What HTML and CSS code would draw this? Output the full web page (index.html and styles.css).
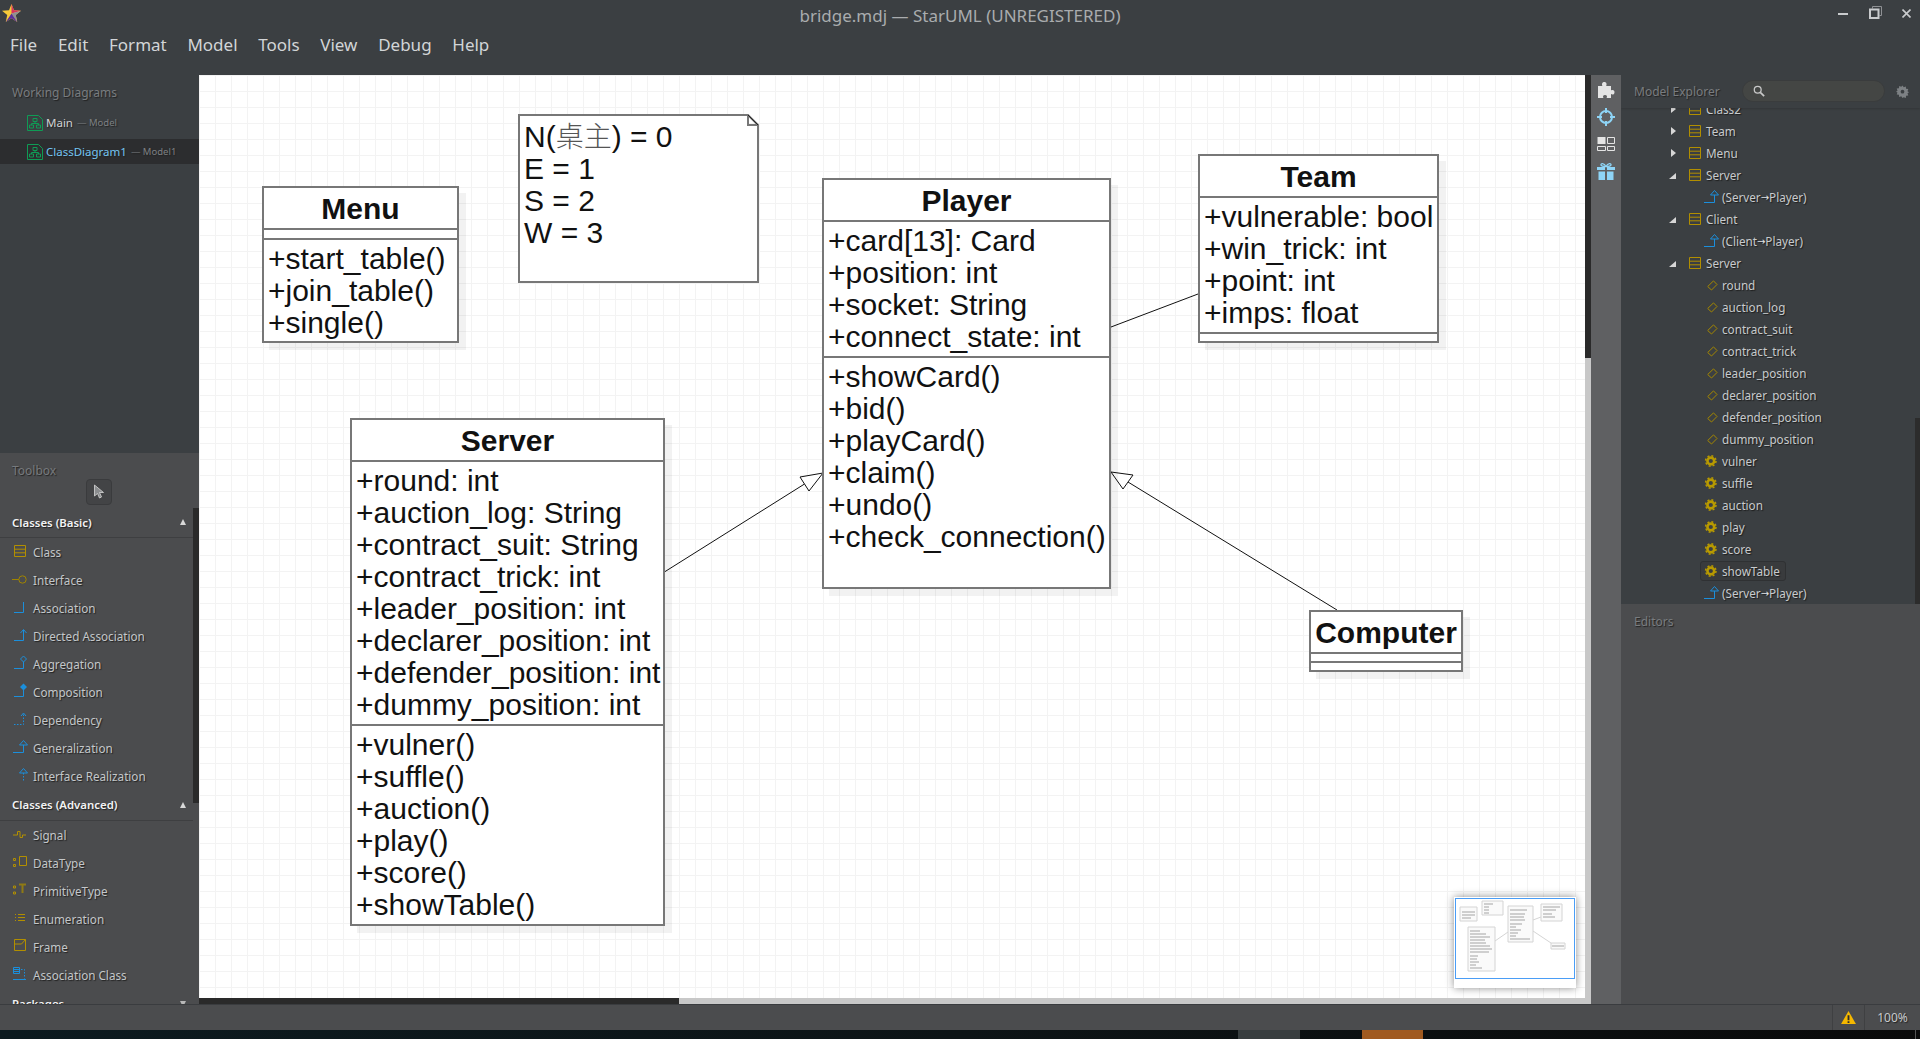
FILE: index.html
```html
<!DOCTYPE html>
<html lang="en">
<head>
    <meta charset="UTF-8">
    <title>bridge.mdj — StarUML (UNREGISTERED)</title>
    <link rel="stylesheet" href="styles.css">
</head>
<body>
    <!-- Icon set -->
    <svg class="icon-defs" aria-hidden="true">
        <symbol id="i-class" viewBox="0 0 16 16"><path d="M2.5 2.5h11v11h-11zM2.5 6.200h11M2.5 9.800h11" fill="none" stroke="#b28f00"/></symbol>
        <symbol id="i-interface" viewBox="0 0 16 16"><path d="M0 8.500h7" stroke="#a08400" fill="none"/><circle cx="10.500" cy="8.500" r="3.700" fill="none" stroke="#a08400"/></symbol>
        <symbol id="i-assoc" viewBox="0 0 16 16"><path d="M2 13.500h9.500V3" fill="none" stroke="#1b8fdc"/></symbol>
        <symbol id="i-directed" viewBox="0 0 16 16"><path d="M2 13.500h9.500V3M8.500 6l3-3.500 3 3.500" fill="none" stroke="#1b8fdc"/></symbol>
        <symbol id="i-aggr" viewBox="0 0 16 16"><path d="M2 13.500h9.500V7M11.500 1l3 3-3 3-3-3z" fill="none" stroke="#1b8fdc"/></symbol>
        <symbol id="i-comp" viewBox="0 0 16 16"><path d="M2 13.500h9.500V7" fill="none" stroke="#1b8fdc"/><path d="M11.500 0.500l3.500 3.500-3.500 3.500L8 4z" fill="#1b8fdc"/></symbol>
        <symbol id="i-dep" viewBox="0 0 16 16"><path d="M2 13.500h9.500V3" fill="none" stroke="#1b8fdc" stroke-dasharray="1.500 1.500"/><path d="M9 5l2.500-3L14 5" fill="none" stroke="#1b8fdc"/></symbol>
        <symbol id="i-gen" viewBox="0 0 16 16"><path d="M1 13.500h10.500V6M7.500 6l4-4.500 4 4.500z" fill="none" stroke="#1b8fdc"/></symbol>
        <symbol id="i-real" viewBox="0 0 16 16"><path d="M11.500 6v9" fill="none" stroke="#1b8fdc" stroke-dasharray="1.500 1.500"/><path d="M7.500 6l4-4.500 4 4.500z" fill="none" stroke="#1b8fdc"/></symbol>
        <symbol id="i-signal" viewBox="0 0 16 16"><path d="M1 9h4.500V5.500h2.500v6h2.500V9H14" fill="none" stroke="#b28f00"/></symbol>
        <symbol id="i-datatype" viewBox="0 0 16 16"><path d="M1.500 3.500h2v2h-2zM1.500 9.500h2v2h-2zM7.500 1.500h7v9h-7z" transform="translate(0 1)" fill="none" stroke="#b28f00"/></symbol>
        <symbol id="i-primitive" viewBox="0 0 16 16"><path d="M1.500 4h2v2h-2zM1.500 10h2v2h-2z" fill="none" stroke="#b28f00"/><path d="M7 2.500h7M10.500 2.500V11" fill="none" stroke="#8f7a14" stroke-width="2"/></symbol>
        <symbol id="i-enum" viewBox="0 0 16 16"><path d="M3 4.500h1M6 4.500h7M3 7.500h1M6 7.500h7M3 10.500h1M6 10.500h7" fill="none" stroke="#b28f00"/></symbol>
        <symbol id="i-frame" viewBox="0 0 16 16"><path d="M2.500 1.500h11v11h-11zM2.500 6h7l4-4.500" fill="none" stroke="#b28f00"/></symbol>
        <symbol id="i-assoc-class" viewBox="0 0 16 16"><path d="M1.500 1.500h6v6h-6zM1.500 3.500h6M1.500 5.500h6" fill="none" stroke="#1b8fdc"/><path d="M9 3.500h3.500v9" fill="none" stroke="#1b8fdc" stroke-dasharray="1.500 1.500"/><path d="M1 13.500h13" stroke="#1b8fdc"/></symbol>
        <symbol id="i-attr" viewBox="0 0 16 16"><path d="M4.700 9.500L10.500 3.900L14 7.500L8.500 13z" fill="none" stroke="#a58800"/></symbol>
        <symbol id="i-op" viewBox="0 0 16 16"><circle cx="7.800" cy="8" r="3.400" fill="none" stroke="#b89a00" stroke-width="2.600"/><circle cx="7.800" cy="8" r="5.200" fill="none" stroke="#b89a00" stroke-width="1.500" stroke-dasharray="2 2.080"/></symbol>
        <symbol id="i-diagram" viewBox="0 0 16 16"><path d="M.5.5h11l4 4v11H.5z" fill="none" stroke="#0f9b55"/><path d="M6 3.500h4v3H6zM2.500 10h4v3h-4zM9.500 10h4v3h-4zM8 6.500V8.500M4.500 10V8.500h7V10" fill="none" stroke="#0f9b55"/></symbol>
    </svg>

    <header class="titlebar">
        <svg class="logo" viewBox="0 0 20 20">
            <polygon points="10,0 12.600,6.500 20,7 14.500,11.500 16,19 10,15 4,19 5.500,11.500 0,7 7.400,6.500" fill="#f6c93a"/>
            <polygon points="10,0 12.600,6.500 20,7 10,10" fill="#d6345f"/>
            <polygon points="20,7 14.500,11.500 16,19 10,10" fill="#8d8f96"/>
            <polygon points="16,19 10,15 4,19 10,10" fill="#5a2f9c"/>
        </svg>
        <span class="window-title">bridge.mdj — StarUML (UNREGISTERED)</span>
        <div class="window-controls">
            <span class="win-min"></span>
            <svg class="win-max" viewBox="0 0 13 13"><path d="M3.500 2.500V.5h9v9h-2" fill="none" stroke="#8f9194"/><path d="M1 3.500h8.500v8.500H1z" fill="none" stroke="#c9cbcd" stroke-width="2"/></svg>
            <svg class="win-close" viewBox="0 0 9 9"><path d="M.5.5l8 8M8.500.5l-8 8" stroke="#c9cbcd" stroke-width="1.600"/></svg>
        </div>
    </header>

    <nav class="menubar">
        <span>File</span><span>Edit</span><span>Format</span><span>Model</span><span>Tools</span><span>View</span><span>Debug</span><span>Help</span>
    </nav>

    <div class="workspace">
        <!-- Left sidebar -->
        <aside class="sidebar">
            <section class="working">
                <h2 class="panel-title">Working Diagrams</h2>
                <div class="diagram-row">
                    <svg class="diagram-icon"><use href="#i-diagram"/></svg><b>Main</b><small>— Model</small>
                </div>
                <div class="diagram-row active">
                    <svg class="diagram-icon"><use href="#i-diagram"/></svg><b>ClassDiagram1</b><small>— Model1</small>
                </div>
            </section>
            <section class="toolbox">
                <h2 class="panel-title">Toolbox</h2>
                <div class="pointer-btn">
                    <svg viewBox="0 0 12 16" width="12" height="16"><path d="M1.500 1v11l3-2.500 2 4.500 2-1-2-4.500h4z" fill="#8b8d8f" stroke="#d8d8d8" stroke-width=".8"/></svg>
                </div>
                <div class="tool-list">
                    <div class="tool-heading">Classes (Basic)<i class="caret-up"></i></div>
                    <div class="tool"><svg><use href="#i-class"/></svg>Class</div>
                    <div class="tool"><svg><use href="#i-interface"/></svg>Interface</div>
                    <div class="tool"><svg><use href="#i-assoc"/></svg>Association</div>
                    <div class="tool"><svg><use href="#i-directed"/></svg>Directed Association</div>
                    <div class="tool"><svg><use href="#i-aggr"/></svg>Aggregation</div>
                    <div class="tool"><svg><use href="#i-comp"/></svg>Composition</div>
                    <div class="tool"><svg><use href="#i-dep"/></svg>Dependency</div>
                    <div class="tool"><svg><use href="#i-gen"/></svg>Generalization</div>
                    <div class="tool"><svg><use href="#i-real"/></svg>Interface Realization</div>
                    <div class="tool-heading">Classes (Advanced)<i class="caret-up"></i></div>
                    <div class="tool"><svg><use href="#i-signal"/></svg>Signal</div>
                    <div class="tool"><svg><use href="#i-datatype"/></svg>DataType</div>
                    <div class="tool"><svg><use href="#i-primitive"/></svg>PrimitiveType</div>
                    <div class="tool"><svg><use href="#i-enum"/></svg>Enumeration</div>
                    <div class="tool"><svg><use href="#i-frame"/></svg>Frame</div>
                    <div class="tool"><svg><use href="#i-assoc-class"/></svg>Association Class</div>
                    <div class="tool-heading">Packages<i class="caret-down"></i></div>
                </div>
                <div class="toolbox-scroll"></div>
            </section>
        </aside>

        <!-- Diagram area -->
        <main class="editor">
            <div class="editor-top">
                <div class="canvas">
                    <svg class="wires" width="1386" height="923">
                        <path d="M912 252L999 219M466 496.600L605.500 409M1138 535L929 407" fill="none" stroke="#111"/>
                        <polygon points="624,398 601,402 610,416" fill="#fff" stroke="#111"/>
                        <polygon points="912,397 934,400 924,414" fill="#fff" stroke="#111"/>
                    </svg>

                    <div class="note">
                        <svg class="note-shape" viewBox="0 0 241 169"><path d="M1 1H230L240 11V168H1zM230 1V11H240" fill="#fff" stroke="#777" stroke-width="2"/><path d="M230 1L240 11" stroke="#222"/></svg>
                        <p>N(<span class="cjk">桌主</span>) = 0</p>
                        <p>E = 1</p>
                        <p>S = 2</p>
                        <p>W = 3</p>
                    </div>

                    <div class="node node-menu">
                        <div class="node-name">Menu</div>
                        <div class="comp comp-empty"></div>
                        <div class="comp comp-fill">
                            <p>+start_table()</p><p>+join_table()</p><p>+single()</p>
                        </div>
                    </div>

                    <div class="node node-player">
                        <div class="node-name">Player</div>
                        <div class="comp">
                            <p>+card[13]: Card</p><p>+position: int</p><p>+socket: String</p><p>+connect_state: int</p>
                        </div>
                        <div class="comp comp-fill">
                            <p>+showCard()</p><p>+bid()</p><p>+playCard()</p><p>+claim()</p><p>+undo()</p><p>+check_connection()</p>
                        </div>
                    </div>

                    <div class="node node-team">
                        <div class="node-name">Team</div>
                        <div class="comp">
                            <p>+vulnerable: bool</p><p>+win_trick: int</p><p>+point: int</p><p>+imps: float</p>
                        </div>
                        <div class="comp comp-empty"></div>
                    </div>

                    <div class="node node-server">
                        <div class="node-name">Server</div>
                        <div class="comp">
                            <p>+round: int</p><p>+auction_log: String</p><p>+contract_suit: String</p><p>+contract_trick: int</p><p>+leader_position: int</p><p>+declarer_position: int</p><p>+defender_position: int</p><p>+dummy_position: int</p>
                        </div>
                        <div class="comp comp-fill">
                            <p>+vulner()</p><p>+suffle()</p><p>+auction()</p><p>+play()</p><p>+score()</p><p>+showTable()</p>
                        </div>
                    </div>

                    <div class="node node-computer">
                        <div class="node-name">Computer</div>
                        <div class="comp comp-empty"></div>
                        <div class="comp comp-empty"></div>
                    </div>

                    <!-- Overview -->
                    <div class="minimap">
                        <svg viewBox="0 0 122 91" width="122" height="91">
                            <g class="mini-art">
                                <path d="M6 10h17v14H6zM28 4h21v14H28zM54 9h25v36H54zM87 7h21v17H87zM14 30h27v44H14zM97 46h14v6H97z" fill="#fafafa" stroke="#d4d4d4"/>
                                <path d="M41 44L54 35M79 23L87 20M79 34L97 46" stroke="#d4d4d4" fill="none"/>
                                <path d="M8 15h13M8 18h13M8 21h9M30 7h9M30 10h5M30 13h5M30 16h5M56 13h17M56 17h15M56 20h14M56 23h15M56 27h12M56 30h6M56 33h11M56 36h8M56 39h6M56 42h20M89 10h17M89 13h13M89 17h9M89 20h12M16 34h10M16 37h16M16 40h20M16 43h15M16 46h16M16 49h20M16 52h22M16 55h19M16 59h8M16 62h7M16 65h9M16 68h6M16 71h12M98 49h12" stroke="#a4a4a4" fill="none"/>
                            </g>
                            <rect class="mini-view" x="1.500" y="1.500" width="119" height="80"/>
                        </svg>
                    </div>
                </div>
                <div class="vscroll"><span></span></div>
            </div>
            <div class="hscroll"><span></span></div>
        </main>

        <!-- Icon rail -->
        <div class="rail">
            <span><svg viewBox="0 0 18 18" width="18" height="18"><path d="M1 5h4.500C4.500 3.500 5 1 7.300 1s2.800 2.500 1.800 4H14v4.500c1.500-1 3.500-.5 3.500 1.800s-2 2.800-3.500 1.800V17H9.500c1-1.500.5-3-1.500-3s-2.500 1.500-1.500 3H1z" fill="#e4e4e4"/></svg></span>
            <span><svg viewBox="0 0 18 18" width="18" height="18"><circle cx="9" cy="9" r="6" fill="none" stroke="#8ed4f6" stroke-width="2"/><path d="M9 0v5M9 13v5M0 9h5M13 9h5" stroke="#8ed4f6" stroke-width="2"/></svg></span>
            <span><svg viewBox="0 0 18 14" width="18" height="14"><path d="M.5 0h8v7h-8z" fill="#e4e4e4"/><path d="M10.500.5h7v6h-7zM.5 9.500h8v4h-8zM10.500 9.500h7v4h-7z" fill="none" stroke="#e4e4e4"/></svg></span>
            <span><svg viewBox="0 0 18 18" width="18" height="18"><path d="M0 5h8v3H0zM10 5h8v3h-8zM1.500 9.500H8V18H1.500zM10 9.500h6.500V18H10z" fill="#8ed4f6"/><path d="M9 4.500C7 1 3.500 1 4 3c.4 1.500 3 1.500 5 1.500s4.600 0 5-1.500c.5-2-3-2-5 1.500z" fill="none" stroke="#8ed4f6" stroke-width="1.300"/></svg></span>
        </div>

        <!-- Right dock -->
        <aside class="dock">
            <section class="explorer">
                <div class="explorer-head">
                    <h2 class="panel-title">Model Explorer</h2>
                    <div class="search">
                        <svg viewBox="0 0 14 14" width="12" height="12"><circle cx="5.500" cy="5.500" r="4" fill="none" stroke="#c8c8c8" stroke-width="1.500"/><path d="M8.500 8.500l4.500 4.500" stroke="#c8c8c8" stroke-width="2"/></svg>
                    </div>
                    <svg class="gear" viewBox="0 0 14 14" width="13" height="13"><path d="M7 .5l1.300 2 2.300-.8.200 2.400 2.400.2-.8 2.300 1.600 1.300-1.600 1.100.8 2.300-2.400.2-.2 2.400-2.300-.8L7 14l-1.300-1.900-2.300.8-.2-2.400-2.400-.2.800-2.300L0 7.400l1.600-1.300-.8-2.300 2.400-.2.200-2.400 2.300.8z" fill="#7d8184"/><circle cx="7" cy="7.200" r="2" fill="#3b3f42"/></svg>
                </div>
                <div class="tree">
                    <div class="tree-row"><i class="arrow-closed"></i><svg class="tree-ic"><use href="#i-class"/></svg>Class2</div>
                    <div class="tree-row"><i class="arrow-closed"></i><svg class="tree-ic"><use href="#i-class"/></svg>Team</div>
                    <div class="tree-row"><i class="arrow-closed"></i><svg class="tree-ic"><use href="#i-class"/></svg>Menu</div>
                    <div class="tree-row"><i class="arrow-open"></i><svg class="tree-ic"><use href="#i-class"/></svg>Server</div>
                    <div class="tree-row child"><svg class="tree-ic"><use href="#i-gen"/></svg>(Server<span class="to">→</span>Player)</div>
                    <div class="tree-row"><i class="arrow-open"></i><svg class="tree-ic"><use href="#i-class"/></svg>Client</div>
                    <div class="tree-row child"><svg class="tree-ic"><use href="#i-gen"/></svg>(Client<span class="to">→</span>Player)</div>
                    <div class="tree-row"><i class="arrow-open"></i><svg class="tree-ic"><use href="#i-class"/></svg>Server</div>
                    <div class="tree-row child"><svg class="tree-ic"><use href="#i-attr"/></svg>round</div>
                    <div class="tree-row child"><svg class="tree-ic"><use href="#i-attr"/></svg>auction_log</div>
                    <div class="tree-row child"><svg class="tree-ic"><use href="#i-attr"/></svg>contract_suit</div>
                    <div class="tree-row child"><svg class="tree-ic"><use href="#i-attr"/></svg>contract_trick</div>
                    <div class="tree-row child"><svg class="tree-ic"><use href="#i-attr"/></svg>leader_position</div>
                    <div class="tree-row child"><svg class="tree-ic"><use href="#i-attr"/></svg>declarer_position</div>
                    <div class="tree-row child"><svg class="tree-ic"><use href="#i-attr"/></svg>defender_position</div>
                    <div class="tree-row child"><svg class="tree-ic"><use href="#i-attr"/></svg>dummy_position</div>
                    <div class="tree-row child"><svg class="tree-ic"><use href="#i-op"/></svg>vulner</div>
                    <div class="tree-row child"><svg class="tree-ic"><use href="#i-op"/></svg>suffle</div>
                    <div class="tree-row child"><svg class="tree-ic"><use href="#i-op"/></svg>auction</div>
                    <div class="tree-row child"><svg class="tree-ic"><use href="#i-op"/></svg>play</div>
                    <div class="tree-row child"><svg class="tree-ic"><use href="#i-op"/></svg>score</div>
                    <div class="tree-row child"><span class="selected"><svg class="tree-ic"><use href="#i-op"/></svg>showTable</span></div>
                    <div class="tree-row child"><svg class="tree-ic"><use href="#i-gen"/></svg>(Server<span class="to">→</span>Player)</div>
                </div>
                <div class="explorer-scroll"></div>
            </section>
            <section class="editors">
                <h2 class="panel-title">Editors</h2>
            </section>
        </aside>
    </div>

    <footer class="statusbar">
        <div class="status-cell status-warn">
            <svg viewBox="0 0 16 14" width="15" height="13"><path d="M8 0l8 14H0z" fill="#f5b800"/><path d="M7 4.500h2V10H7zM7 11h2v2H7z" fill="#2c2c2c"/></svg>
        </div>
        <div class="status-cell status-zoom">100%</div>
    </footer>

    <div class="taskbar">
        <span class="task-gap"></span>
        <span class="task-grey"></span>
        <span class="task-dark"></span>
        <span class="task-orange"></span>
        <span class="task-rest"></span>
    </div>
</body>
</html>
```

FILE: styles.css
```css
/* General */
* {
    box-sizing: border-box;
}

html, body {
    height: 100%;
}

body {
    margin: 0;
    display: flex;
    flex-direction: column;
    overflow: hidden;
    background: #3b3f42;
    color: #c8cacc;
    font-family: "Noto Sans", "Open Sans", sans-serif;
    font-size: 12px;
}

h2, p {
    margin: 0;
}

.icon-defs {
    position: absolute;
    width: 0;
    height: 0;
}

/* Title bar */
.titlebar {
    height: 32px;
    flex: none;
    position: relative;
    display: flex;
    align-items: center;
    justify-content: center;
}

.logo {
    position: absolute;
    left: 2px;
    top: 4px;
    width: 19px;
    height: 19px;
}

.window-title {
    margin-top: -2px;
    font-size: 17px;
    color: #a9acae;
}

.window-controls {
    position: absolute;
    left: 1838px;
    top: 5px;
    display: flex;
    align-items: center;
    height: 14px;
}

.win-min {
    width: 10px;
    height: 2px;
    margin: 4px 21px 0 0;
    background: #c9cbcd;
}

.win-max {
    width: 13px;
    height: 13px;
    margin-right: 20px;
}

.win-close {
    width: 9px;
    height: 9px;
    margin-top: 2px;
}

/* Menu bar */
.menubar {
    height: 43px;
    flex: none;
    padding: 0 0 18px 10px;
    display: flex;
    align-items: center;
    gap: 20.7px;
    font-size: 17px;
    color: #d2d5d7;
}

/* Main layout */
.workspace {
    flex: 1;
    min-height: 0;
    display: flex;
}

.panel-title {
    font-size: 12px;
    font-weight: 400;
    color: #797c7f;
    text-shadow: 1px 1px 1px #222;
}

/* Sidebar */
.sidebar {
    width: 199px;
    flex: none;
    display: flex;
    flex-direction: column;
}

.working {
    height: 378px;
    flex: none;
    padding-top: 9px;
}

.working .panel-title {
    padding-left: 12px;
    height: 26px;
}

.diagram-row {
    height: 25px;
    margin-bottom: 4px;
    padding-left: 27px;
    display: flex;
    align-items: center;
    font-size: 11.5px;
    text-shadow: 1px 1px 1px #222;
}

.diagram-row b {
    font-weight: 400;
    margin-left: 3px;
    color: #d0d2d4;
}

.diagram-row small {
    margin-left: 4px;
    font-size: 9.5px;
    color: #7d8083;
}

.diagram-row.active {
    background: #2c2d2f;
}

.diagram-row.active b {
    color: #74c4f2;
}

.diagram-icon {
    width: 16px;
    height: 16px;
}

.toolbox {
    flex: 1;
    min-height: 0;
    position: relative;
    overflow: hidden;
    background: #4b4c4e;
}

.toolbox .panel-title {
    padding: 9px 0 0 12px;
    height: 26px;
    color: #777a7d;
}

.pointer-btn {
    width: 26px;
    height: 26px;
    margin-left: 86px;
    margin-bottom: 3px;
    display: flex;
    align-items: center;
    justify-content: center;
    background: #434446;
    border: 1px solid #3a3b3d;
    border-radius: 4px;
}

.tool-list {
    width: 193px;
}

.tool-heading {
    height: 30px;
    padding: 0 0 1px 12px;
    display: flex;
    align-items: center;
    justify-content: space-between;
    border-bottom: 1px solid #3e3f41;
    font-size: 11.4px;
    font-weight: 600;
    color: #f2f3f4;
    text-shadow: 1px 1px 1px #222;
}

.tool + .tool-heading {
    height: 31px;
}

.caret-up, .caret-down {
    width: 0;
    height: 0;
    margin-right: 7px;
    border-left: 3.5px solid transparent;
    border-right: 3.5px solid transparent;
}

.caret-up {
    border-bottom: 6px solid #d8d8d8;
}

.caret-down {
    border-top: 6px solid #b8b8b8;
}

.tool {
    height: 28px;
    padding-left: 12px;
    display: flex;
    align-items: center;
    gap: 5px;
    font-size: 11.7px;
    color: #c4c7c9;
    text-shadow: 1px 1px 1px #222;
}

.tool svg {
    width: 16px;
    height: 16px;
    flex: none;
    margin-top: -2px;
}

.toolbox-scroll {
    position: absolute;
    left: 193px;
    top: 55px;
    width: 6px;
    height: 295px;
    background: #2a2a2a;
}

/* Diagram area */
.editor {
    width: 1392px;
    flex: none;
    display: flex;
    flex-direction: column;
}

.editor-top {
    flex: 1;
    min-height: 0;
    display: flex;
}

.canvas {
    flex: 1;
    position: relative;
    overflow: hidden;
    background-color: #fff;
    background-image:
        linear-gradient(#f3f3f3 1px, transparent 1px),
        linear-gradient(90deg, #f3f3f3 1px, transparent 1px);
    background-size: 16px 16px;
    color: #111;
    font-family: "Liberation Sans", Arial, sans-serif;
    font-size: 30px;
    line-height: 32px;
}

.wires {
    position: absolute;
    left: 0;
    top: 0;
}

/* UML nodes: their place on the canvas is the content */
.node {
    position: absolute;
    display: flex;
    flex-direction: column;
    background: #fff;
    border: 2px solid #777;
    box-shadow: 7px 7px 0 rgba(0, 0, 0, 0.05);
}

.node-name {
    height: 40px;
    flex: none;
    text-align: center;
    font-weight: 700;
    font-size: 30px;
    line-height: 41px;
}

.comp {
    padding: 3px 0 3px 4px;
    border-top: 2px solid #777;
    white-space: nowrap;
}

.comp-empty {
    height: 9px;
    padding: 0;
}

.comp-fill {
    flex: 1;
}

.node-menu {
    left: 63px;
    top: 111px;
    width: 197px;
}

.node-menu .comp-empty {
    height: 10px;
}

.node-menu .comp-fill {
    padding-bottom: 2px;
}

.node-player {
    left: 623px;
    top: 103px;
    width: 289px;
    height: 411px;
}

.node-team {
    left: 999px;
    top: 79px;
    width: 241px;
}

.node-server {
    left: 151px;
    top: 343px;
    width: 315px;
}

.node-computer {
    left: 1110px;
    top: 535px;
    width: 154px;
}

.note {
    position: absolute;
    left: 319px;
    top: 39px;
    width: 241px;
    height: 169px;
    padding: 5px 6px;
}

.note p {
    position: relative;
}

.note-shape {
    position: absolute;
    left: 0;
    top: 0;
    width: 241px;
    height: 169px;
}

.cjk {
    font-family: "Noto Sans CJK TC", sans-serif;
    font-size: 28px;
    font-weight: 300;
    color: #555;
}

/* Overview */
.minimap {
    position: absolute;
    right: 9px;
    bottom: 10px;
    width: 122px;
    height: 91px;
    background: #fff;
    box-shadow: 0 0 8px rgba(0, 0, 0, 0.45);
    line-height: 0;
}

.mini-art {
    filter: blur(0.7px);
}

.mini-view {
    fill: none;
    stroke: #4a9df6;
}

/* Scrollbars */
.vscroll {
    width: 6px;
    background: #c8c8c8;
}

.vscroll span {
    display: block;
    height: 283px;
    background: #2a2a2a;
}

.hscroll {
    height: 6px;
    flex: none;
    background: #c8c8c8;
}

.hscroll span {
    display: block;
    width: 480px;
    height: 6px;
    background: #2a2a2a;
}

/* Icon rail */
.rail {
    width: 30px;
    flex: none;
    padding-top: 1px;
    display: flex;
    flex-direction: column;
    background: #5f6062;
}

.rail span {
    height: 27px;
    display: flex;
    align-items: center;
    justify-content: center;
}

/* Right dock */
.dock {
    flex: 1;
    min-width: 0;
    display: flex;
    flex-direction: column;
}

.explorer {
    height: 529px;
    flex: none;
    position: relative;
    overflow: hidden;
}

.explorer-head {
    height: 33px;
    position: relative;
    z-index: 1;
    display: flex;
    align-items: center;
    padding-left: 13px;
    background: #3b3f42;
    box-shadow: 0 1px 2px rgba(0, 0, 0, 0.15);
}

.search {
    position: absolute;
    left: 121px;
    top: 5px;
    width: 143px;
    height: 22px;
    padding-left: 10px;
    display: flex;
    align-items: center;
    background: #444644;
    border: 1px solid #3a3c3d;
    border-radius: 11px;
}

.gear {
    position: absolute;
    left: 275px;
    top: 10px;
}

.tree {
    margin-top: -10px;
}

.tree-row {
    height: 22px;
    padding-left: 48px;
    display: flex;
    align-items: center;
    font-size: 11.7px;
    color: #c8cbcd;
    text-shadow: 1px 1px 1px #1e1e1e;
    white-space: nowrap;
}

.tree-row.child {
    padding-left: 82px;
}

.to {
    font-family: "DejaVu Sans", sans-serif;
    font-size: 10px;
    color: #e0e2e4;
}

.arrow-closed, .arrow-open {
    width: 0;
    height: 0;
    flex: none;
}

.arrow-closed {
    margin: 0 11px 0 2px;
    border-top: 4px solid transparent;
    border-bottom: 4px solid transparent;
    border-left: 5px solid #d6d6d6;
}

.arrow-open {
    margin: 2px 11px 0 0;
    border-bottom: 6px solid #d6d6d6;
    border-left: 7px solid transparent;
}

.tree-ic {
    width: 16px;
    height: 16px;
    flex: none;
    margin-right: 3px;
}

.selected {
    height: 20px;
    margin-left: -3px;
    padding: 0 5px 0 2px;
    display: flex;
    align-items: center;
    background: #393b3d;
    border: 1px solid #2f3133;
    border-radius: 3px;
}

.explorer-scroll {
    position: absolute;
    right: 0;
    bottom: 0;
    width: 5px;
    height: 186px;
    background: #2c2c2c;
}

.editors {
    flex: 1;
    padding: 9px 0 0 13px;
    background: #4b4c4e;
}

/* Status bar */
.statusbar {
    height: 26px;
    flex: none;
    display: flex;
    justify-content: flex-end;
    background: #4b4c4e;
    border-top: 1px solid #3a3c3f;
}

.status-cell {
    display: flex;
    align-items: center;
    justify-content: center;
    border-left: 1px solid #3f4042;
    text-shadow: 1px 1px 1px #222;
}

.status-warn {
    width: 32px;
}

.status-zoom {
    width: 56px;
    font-size: 12px;
    color: #c8cacc;
}

/* Desktop strip below the window */
.taskbar {
    height: 9px;
    flex: none;
    display: flex;
    background: linear-gradient(90deg, #0c1a1f, #0d1416 50%, #0a0a0a);
}

.task-gap {
    width: 1238px;
}

.task-grey {
    width: 62px;
    background: #383e3f;
}

.task-dark {
    width: 62px;
}

.task-orange {
    width: 61px;
    background: #a05a20;
}

.task-rest {
    flex: 1;
    margin-left: 492px;
    border-left: 1px solid #555;
}
```
